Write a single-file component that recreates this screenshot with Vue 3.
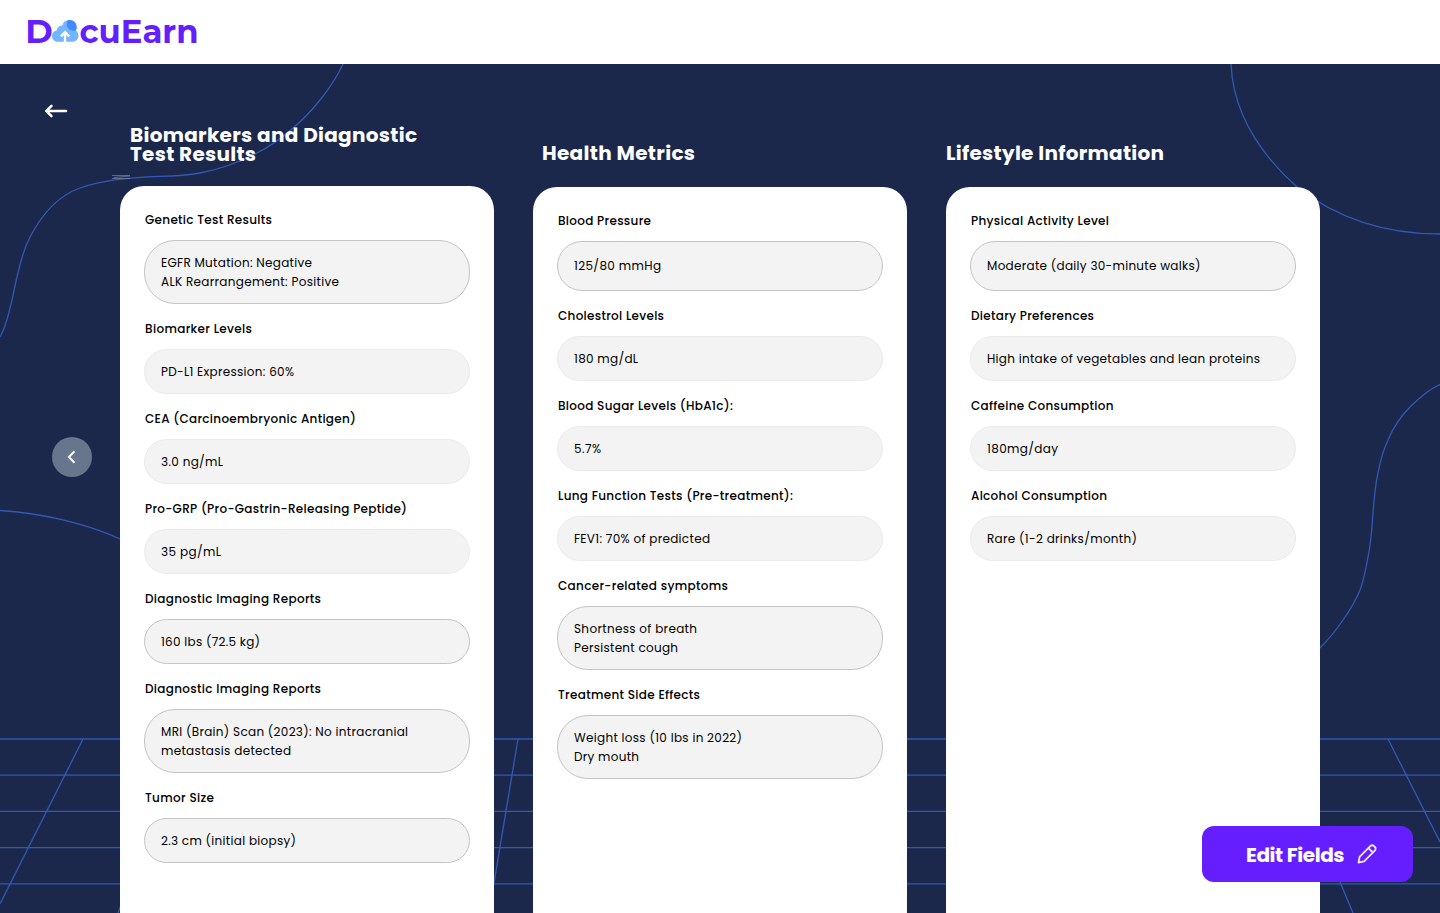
<script setup>
// Text entries are [text, rendered width in px].
const columns = [
  {
    title: [['Biomarkers and Diagnostic', 287], ['Test Results', 126]],
    fields: [
      { label: ['Genetic Test Results', 127], lines: [['EGFR Mutation: Negative', 151], ['ALK Rearrangement: Positive', 178]], outlined: true },
      { label: ['Biomarker Levels', 107], lines: [['PD-L1 Expression: 60%', 133]] },
      { label: ['CEA (Carcinoembryonic Antigen)', 211], lines: [['3.0 ng/mL', 62]] },
      { label: ['Pro-GRP (Pro-Gastrin-Releasing Peptide)', 262], lines: [['35 pg/mL', 60]] },
      { label: ['Diagnostic Imaging Reports', 176], lines: [['160 lbs (72.5 kg)', 99]], outlined: true },
      { label: ['Diagnostic Imaging Reports', 176], lines: [['MRI (Brain) Scan (2023): No intracranial', 247], ['metastasis detected', 130]], outlined: true },
      { label: ['Tumor Size', 69], lines: [['2.3 cm (initial biopsy)', 135]], outlined: true },
    ],
  },
  {
    title: [['Health Metrics', 153]],
    fields: [
      { label: ['Blood Pressure', 93], lines: [['125/80 mmHg', 87]], outlined: true, tall: true },
      { label: ['Cholestrol Levels', 106], lines: [['180 mg/dL', 64]] },
      { label: ['Blood Sugar Levels (HbA1c):', 175], lines: [['5.7%', 27]] },
      { label: ['Lung Function Tests (Pre-treatment):', 235], lines: [['FEV1: 70% of predicted', 136]] },
      { label: ['Cancer-related symptoms', 170], lines: [['Shortness of breath', 123], ['Persistent cough', 104]], outlined: true },
      { label: ['Treatment Side Effects', 142], lines: [['Weight loss (10 lbs in 2022)', 168], ['Dry mouth', 65]], outlined: true },
    ],
  },
  {
    title: [['Lifestyle Information', 218]],
    fields: [
      { label: ['Physical Activity Level', 138], lines: [['Moderate (daily 30-minute walks)', 213.5]], outlined: true, tall: true },
      { label: ['Dietary Preferences', 123], lines: [['High intake of vegetables and lean proteins', 273]] },
      { label: ['Caffeine Consumption', 142.5], lines: [['180mg/day', 71]] },
      { label: ['Alcohol Consumption', 136], lines: [['Rare (1-2 drinks/month)', 150]] },
    ],
  },
]

// Tracks a line of text so that it fills the given width.
const vTrack = {
  mounted(el, { value }) {
    const natural = el.getBoundingClientRect().width
    el.style.letterSpacing = `${(value - natural) / (el.textContent.length - 1)}px`
  },
}
</script>

<template>
  <div class="page">
    <header class="topbar">
      <svg class="logo" width="180" height="40" viewBox="0 0 180 40">
        <text x="1.200" y="30.500" textLength="27.500" lengthAdjust="spacingAndGlyphs">D</text>
        <path d="M34 29.700C30.500 29.700 28 27.200 28 24.200C28 21.200 30 19 32.800 18.600C33 15.600 35.300 13.600 38.300 13.600C39 10.200 41.700 8 45.200 8C49.600 8 52.600 11.200 52.600 15.200C52.600 16.600 52.300 17.700 51.800 18.500C53.500 19.500 54.500 21.500 54.500 23.800C54.500 27.200 52 29.700 48.600 29.700Z" fill="#73b5ff" />
        <path d="M44 8.200C49 7.400 52.600 10.800 52.600 15.200C52.600 16.600 52.300 17.700 51.800 18.500C47 19.600 42.800 16.800 42.800 12.600C42.800 10.800 43.200 9.300 44 8.200Z" fill="#448aff" />
        <path d="M41 30V21M36.800 24.400L41 20.200L45.200 24.400" fill="none" stroke="#fff" stroke-width="2.400" />
        <text x="55.500" y="30.500" textLength="119" lengthAdjust="spacingAndGlyphs">cuEarn</text>
      </svg>
    </header>

    <main class="stage">
      <svg class="backdrop" width="1440" height="849" viewBox="0 64 1440 849" fill="none" stroke="#3159b5" stroke-width="1.300">
        <path d="M343 64C337 77 329 89 320 100C312 110 303 120 293 128C282 138 269 147 255 154C238 163 220 169 200 173C187 175.500 175 176 160 176.300C125 177.500 100 180.500 80 188C57 196 41 216 30 237C23 251 20 264 18 273C14 288 13 298 10 308C7 321 4 330 0 337" />
        <path d="M1231 64C1233 110 1258 152 1297 187C1330 213 1375 234 1440 234" />
        <path d="M1440 384.500C1429 389 1419 398 1410 407C1400 417 1393 428 1388 440C1383 451 1380 462 1378 473C1375 486 1374 500 1373 513C1372 528 1371 543 1368 557C1366 568 1364 580 1360 590C1356 600 1350 610 1343 620C1337 629 1329 639 1320 648" />
        <path d="M0 510.500C40 513 85 523 120 539" />
        <path d="M0 739H1440M0 775.200H1440M0 811.400H1440M0 847.600H1440M0 883.800H1440" />
        <path d="M83 739L0 904M518 739L494 883M121 905L118 913M1388 739L1440 842M1340 882L1353 913" />
        <path d="M112 175.500H130M114 177.500L130 176M112 178.500H130" stroke="#8c95a8" stroke-width=".6" />
      </svg>

      <button class="back" aria-label="Back">
        <svg width="24" height="16" viewBox="0 0 24 16" fill="none" stroke="#fff" stroke-width="2.500" stroke-linecap="round" stroke-linejoin="round">
          <path d="M22 8H2.300M7.500 2.800L2.300 8l5.200 5.200" />
        </svg>
      </button>

      <button class="previous" aria-label="Previous">
        <svg width="12" height="16" viewBox="0 0 12 16" fill="none" stroke="#f4f5f7" stroke-width="2.100">
          <path d="M8.500 2.300L2.900 8l5.600 5.700" />
        </svg>
      </button>

      <div class="columns">
        <section v-for="(column, c) in columns" :key="c" class="column">
          <h2 class="title">
            <span v-for="[text, width] in column.title" :key="text" class="row"><span v-track="width" class="run">{{ text }}</span></span>
          </h2>
          <div class="card">
            <div v-for="(field, f) in column.fields" :key="f" class="field">
              <div class="label"><span v-track="field.label[1]" class="run">{{ field.label[0] }}</span></div>
              <div class="value" :class="{ outlined: field.outlined, tall: field.tall, multi: field.lines.length > 1 }">
                <div v-for="[text, width] in field.lines" :key="text" class="row"><span v-track="width" class="run">{{ text }}</span></div>
              </div>
            </div>
          </div>
        </section>
      </div>

      <button class="edit">
        <span v-track="98.5" class="run">Edit Fields</span>
        <svg width="20" height="20" viewBox="0 0 20 20" fill="none" stroke="#f0e8ff" stroke-width="1.800" stroke-linejoin="round">
          <path d="M1.500 18.500l1.100-5.600L13.300 2.200c1.100-1.100 2.700-1.100 3.700-.1l.9.900c1 1 1 2.600-.1 3.700L7.100 17.400z" />
          <path d="M11.500 4.200l4.300 4.300" />
        </svg>
      </button>
    </main>
  </div>
</template>

<style>
body {
  overflow: hidden;
}
</style>

<style scoped>
.page {
  height: 913px;
  overflow: hidden;
  font-family: Poppins, Inter, sans-serif;
  color: #000;
}
.topbar {
  display: flex;
  height: 64px;
  padding: 12px 24px;
  box-sizing: border-box;
  background: #fff;
}
.logo {
  font-family: Montserrat, Inter, sans-serif;
  font-weight: 700;
  font-size: 32px;
  fill: #651fff;
}
.stage {
  position: relative;
  height: 849px;
  overflow: hidden;
  background: #1b284c;
}
.backdrop {
  position: absolute;
  inset: 0;
}
button {
  border: 0;
  padding: 0;
  font: inherit;
}
.back {
  position: absolute;
  left: 44px;
  top: 39px;
  display: flex;
  background: none;
}
.previous {
  position: absolute;
  left: 52px;
  top: 373px;
  display: flex;
  align-items: center;
  justify-content: center;
  width: 40px;
  height: 40px;
  border-radius: 50%;
  background: #67768c;
}
.columns {
  position: relative;
  display: flex;
  gap: 39px;
  height: 100%;
  padding: 0 120px;
}
.column {
  display: flex;
  flex-direction: column;
  width: 374px;
}
.title {
  display: flex;
  flex-direction: column;
  justify-content: flex-end;
  height: 123px;
  margin: 0;
  padding: 0 0 24px 9px;
  box-sizing: border-box;
  font-size: 20px;
  line-height: 19px;
  font-weight: 700;
  color: #fff;
}
.column:first-child .title {
  height: 122px;
  padding: 0 0 22px 10px;
}
.column:last-child .title {
  padding-left: 0;
}
.row {
  display: block;
  white-space: nowrap;
}
.run {
  display: inline-block;
  white-space: nowrap;
}
.card {
  display: flex;
  flex-direction: column;
  flex: 1;
  gap: 15px;
  padding: 24px;
  border-radius: 24px 24px 0 0;
  background: #fff;
}
.label {
  margin: 0 0 11px 1px;
  font-size: 12px;
  line-height: 19px;
  font-weight: 500;
}
.value {
  padding: 12px 16px;
  border: 1px solid #ebebeb;
  border-radius: 23px;
  background: #f3f3f3;
  font-size: 12px;
  line-height: 19px;
}
.value.outlined {
  border-color: #c4c4c4;
}
.value.tall {
  padding-block: 14px 15px;
  border-radius: 25px;
}
.value.multi {
  border-radius: 31px;
}
.edit {
  position: absolute;
  left: 1202px;
  top: 762px;
  display: flex;
  align-items: center;
  gap: 13px;
  width: 211px;
  height: 56px;
  padding-left: 44px;
  border-radius: 12px;
  background: #651fff;
  color: #fff;
  font-size: 20px;
  font-weight: 700;
}
.edit .run {
  padding-top: 2px;
}
</style>
